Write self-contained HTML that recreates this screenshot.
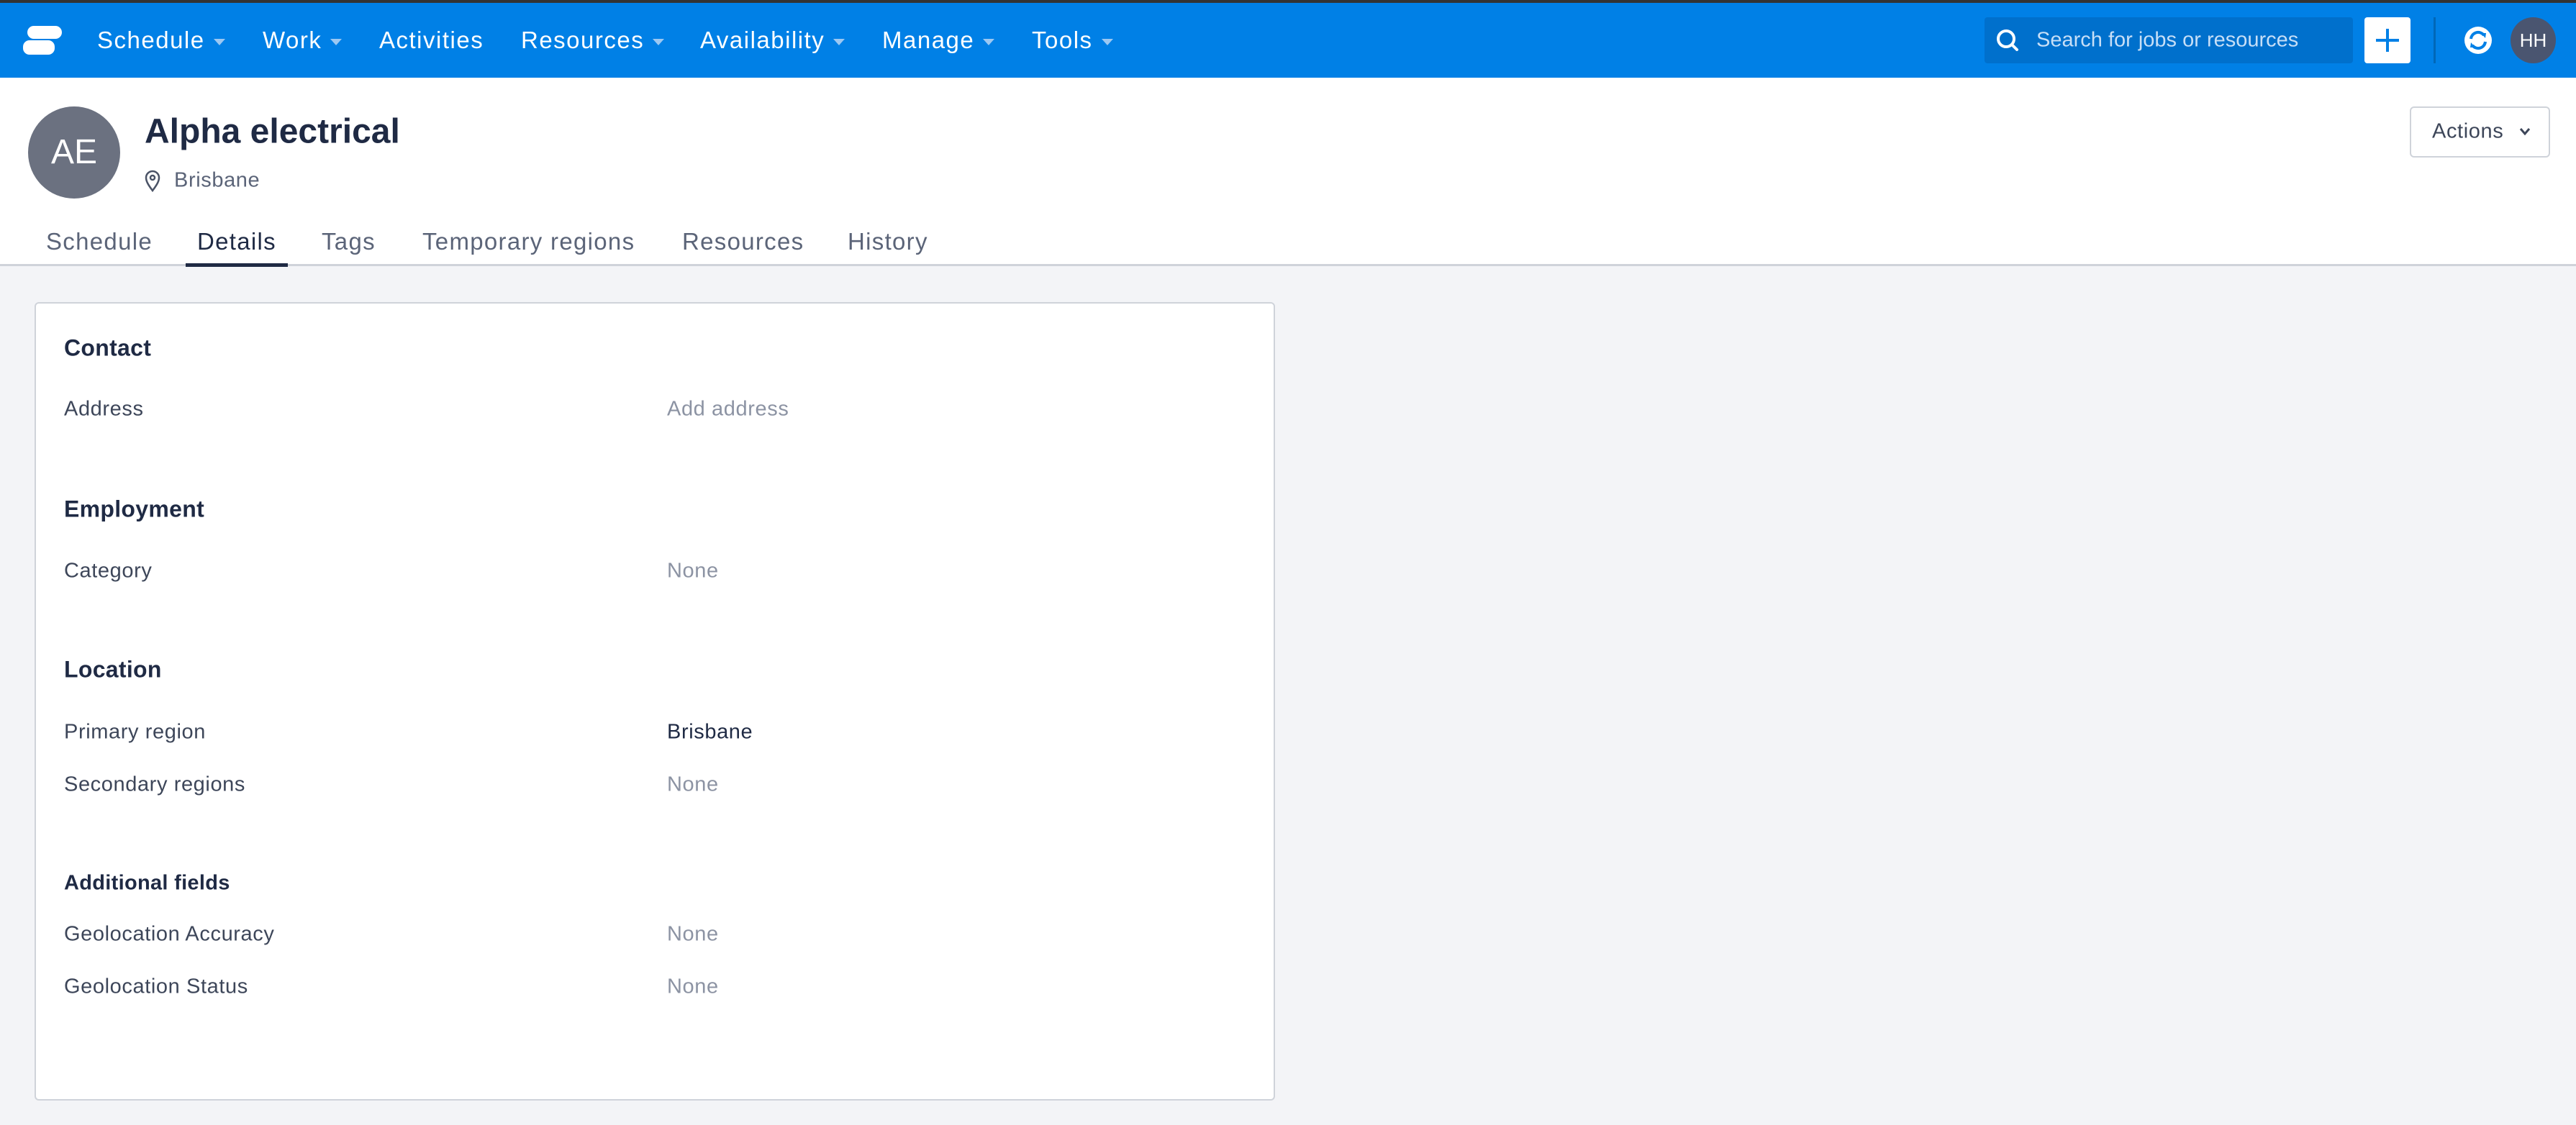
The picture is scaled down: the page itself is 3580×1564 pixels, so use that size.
<!DOCTYPE html>
<html><head><meta charset="utf-8"><style>
*{box-sizing:border-box;margin:0;padding:0}
body{width:3580px;height:1564px;background:#f3f4f7;font-family:"Liberation Sans",sans-serif;position:relative;overflow:hidden;color:#1f2a44}
.abs{position:absolute;white-space:nowrap}
.top{position:absolute;left:0;top:0;width:3580px;height:4px;background:#333}
.nav{position:absolute;left:0;top:4px;width:3580px;height:104px;background:#0080e6}
.ni{position:absolute;top:56px;transform:translateY(-50%);color:#fff;font-size:33px;letter-spacing:1.5px}
.ni .c{display:inline-block;margin-left:12px;width:0;height:0;border-left:8px solid transparent;border-right:8px solid transparent;border-top:9px solid #9cc8f2;vertical-align:middle}
.hdr{position:absolute;left:0;top:108px;width:3580px;height:262px;background:#fff;border-bottom:3px solid #cfd3da}
.tab{position:absolute;top:336px;transform:translateY(-50%);font-size:33px;color:#5b6478;letter-spacing:1.3px}
.card{position:absolute;left:48px;top:420px;width:1724px;height:1110px;background:#fff;border:2px solid #cfd3da;border-radius:6px}
.h{position:absolute;left:89px;font-size:32px;font-weight:bold;color:#1f2a44;transform:translateY(-50%);letter-spacing:0.3px}
.l{position:absolute;left:89px;font-size:29px;color:#3d4659;transform:translateY(-50%);letter-spacing:0.6px}
.v{position:absolute;left:927px;font-size:29px;color:#8c93a3;transform:translateY(-50%);letter-spacing:0.6px}
</style></head><body>
<div class="top"></div>
<div class="nav"></div>
<svg class="abs" style="left:30px;top:34px" width="60" height="44" viewBox="0 0 60 44"><rect x="8" y="2" width="48" height="18" rx="9" fill="#fff"/><rect x="2" y="22" width="44" height="20" rx="9" fill="#fff"/></svg>
<div class="ni" style="left:135px">Schedule<span class="c"></span></div>
<div class="ni" style="left:365px">Work<span class="c"></span></div>
<div class="ni" style="left:527px">Activities</div>
<div class="ni" style="left:724px">Resources<span class="c"></span></div>
<div class="ni" style="left:973px">Availability<span class="c"></span></div>
<div class="ni" style="left:1226px">Manage<span class="c"></span></div>
<div class="ni" style="left:1434px">Tools<span class="c"></span></div>
<div class="abs" style="left:2758px;top:24px;width:512px;height:64px;background:#0070cc;border-radius:4px"></div>
<svg class="abs" style="left:2772px;top:38px" width="36" height="36" viewBox="0 0 36 36"><circle cx="16" cy="16" r="11" fill="none" stroke="#fff" stroke-width="4"/><line x1="24" y1="24" x2="31" y2="31" stroke="#fff" stroke-width="4" stroke-linecap="round"/></svg>
<div class="abs" style="left:2830px;top:56px;transform:translateY(-50%);font-size:29px;color:#c7dff7">Search for jobs or resources</div>
<div class="abs" style="left:3286px;top:24px;width:64px;height:64px;background:#fff;border-radius:4px"></div>
<svg class="abs" style="left:3298px;top:36px" width="40" height="40"><line x1="20" y1="4" x2="20" y2="36" stroke="#0080e6" stroke-width="4"/><line x1="4" y1="20" x2="36" y2="20" stroke="#0080e6" stroke-width="4"/></svg>
<div class="abs" style="left:3382px;top:24px;width:3px;height:64px;background:#0067b8"></div>
<svg class="abs" style="left:3424px;top:36px" width="40" height="40" viewBox="0 0 40 40"><circle cx="20" cy="20" r="19" fill="#fff"/><path d="M10 18a10 10 0 0 1 18-5M30 22a10 10 0 0 1-18 5" fill="none" stroke="#0080e6" stroke-width="4"/><path d="M24 10l7 0l-1 7z M16 30l-7 0l1-7z" fill="#0080e6"/></svg>
<div class="abs" style="left:3489px;top:24px;width:63px;height:64px;border-radius:50%;background:#4a5570;color:#fff;font-size:26px;text-align:center;line-height:64px">HH</div>
<div class="hdr"></div>
<div class="abs" style="left:39px;top:148px;width:128px;height:128px;border-radius:50%;background:#6b7180;color:#fff;font-size:48px;text-align:center;line-height:128px">AE</div>
<div class="abs" style="left:201px;top:183px;transform:translateY(-50%);font-size:48px;font-weight:bold;color:#1f2a44">Alpha electrical</div>
<svg class="abs" style="left:200px;top:236px" width="24" height="32" viewBox="0 0 24 32"><path d="M12 29C6 21 3 16 3 11a9 9 0 0 1 18 0c0 5-3 10-9 18z" fill="none" stroke="#4a5366" stroke-width="2.5"/><circle cx="12" cy="11" r="3" fill="none" stroke="#4a5366" stroke-width="2.5"/></svg>
<div class="abs" style="left:242px;top:251px;transform:translateY(-50%);font-size:29px;color:#5b6478;letter-spacing:0.6px">Brisbane</div>
<div class="abs" style="left:3349px;top:148px;width:195px;height:71px;border:2px solid #cfd3da;border-radius:6px;background:#fff"></div>
<div class="abs" style="left:3380px;top:183px;transform:translateY(-50%);font-size:29px;color:#3d4659;letter-spacing:0.6px">Actions</div>
<svg class="abs" style="left:3500px;top:176px" width="18" height="14"><path d="M3 3l6 7 6-7" fill="none" stroke="#3d4659" stroke-width="3"/></svg>
<div class="tab" style="left:64px">Schedule</div>
<div class="tab" style="left:274px;color:#1f2a44">Details</div>
<div class="tab" style="left:447px">Tags</div>
<div class="tab" style="left:587px">Temporary regions</div>
<div class="tab" style="left:948px">Resources</div>
<div class="tab" style="left:1178px">History</div>
<div class="abs" style="left:258px;top:366px;width:142px;height:5px;background:#1f2a44"></div>
<div class="card"></div>
<div class="h" style="top:484px">Contact</div>
<div class="l" style="top:569px">Address</div><div class="v" style="top:569px">Add address</div>
<div class="h" style="top:708px">Employment</div>
<div class="l" style="top:794px">Category</div><div class="v" style="top:794px">None</div>
<div class="h" style="top:931px">Location</div>
<div class="l" style="top:1018px">Primary region</div><div class="v" style="top:1018px;color:#1f2a44">Brisbane</div>
<div class="l" style="top:1091px">Secondary regions</div><div class="v" style="top:1091px">None</div>
<div class="h" style="top:1228px;font-size:29px">Additional fields</div>
<div class="l" style="top:1299px">Geolocation Accuracy</div><div class="v" style="top:1299px">None</div>
<div class="l" style="top:1372px">Geolocation Status</div><div class="v" style="top:1372px">None</div>
</body></html>
